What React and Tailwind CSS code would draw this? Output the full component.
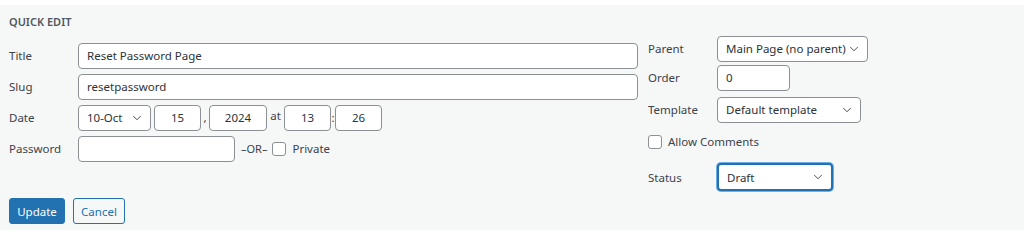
import { ChevronDown } from 'lucide-react'

const font = { fontFamily: '"Noto Sans", "Open Sans", sans-serif' }

function Label({ children }) {
  return <span className="w-[69px] shrink-0 text-[11.5px] text-[#3c434a]">{children}</span>
}

function TextBox({ value, className = '', center }) {
  return (
    <div
      className={`h-[26px] bg-white border border-[#8c8f94] rounded-[4px] flex items-center text-[11.5px] text-[#2c3338] ${
        center ? 'justify-center' : 'px-[8px]'
      } ${className}`}
    >
      {value}
    </div>
  )
}

function Select({ value, className = '', focused }) {
  return (
    <div
      className={`bg-white rounded-[4px] flex items-center justify-between pl-[8px] pr-[6px] text-[11.5px] text-[#2c3338] ${
        focused
          ? 'h-[28px] border-2 border-[#2271b1] shadow-[0_0_0_1px_#72aee6]'
          : 'h-[26px] border border-[#8c8f94]'
      } ${className}`}
    >
      <span className="whitespace-nowrap">{value}</span>
      <ChevronDown size={14} strokeWidth={1.6} color="#3c434a" />
    </div>
  )
}

function Checkbox() {
  return <span className="w-[14px] h-[14px] bg-white border border-[#8c8f94] rounded-[3px] shrink-0" />
}

export default function App() {
  return (
    <div className="w-[1024px] h-[230px] bg-white pt-[5px]" style={font}>
      <div className="h-full bg-[#f6f7f7] px-[9px]">
        <div className="pt-[9px] h-[31px] text-[11px] font-semibold uppercase text-[#50575e]">Quick Edit</div>

        <div className="flex gap-[10px] items-start">
          {/* left fieldset */}
          <div className="w-[629px] pt-[7px] flex flex-col gap-[5px]">
            <div className="flex items-center">
              <Label>Title</Label>
              <TextBox value="Reset Password Page" className="flex-1" />
            </div>
            <div className="flex items-center">
              <Label>Slug</Label>
              <TextBox value="resetpassword" className="flex-1" />
            </div>
            <div className="flex items-center text-[11.5px] text-[#3c434a]">
              <Label>Date</Label>
              <Select value="10-Oct" className="w-[73px]" />
              <TextBox value="15" center className="w-[47px] ml-[3px]" />
              <span className="w-[8px] text-center">,</span>
              <TextBox value="2024" center className="w-[58px]" />
              <span className="w-[17px] text-center -mt-[4px]">at</span>
              <TextBox value="13" center className="w-[47px]" />
              <span className="w-[4px] text-center">:</span>
              <TextBox value="26" center className="w-[47px]" />
            </div>
            <div className="flex items-center text-[11.5px] text-[#3c434a]">
              <Label>Password</Label>
              <TextBox value="" className="w-[157px]" />
              <span className="ml-[6px] text-[11px]">–OR–</span>
              <span className="ml-[5px] mr-[6px] flex"><Checkbox /></span>
              <span>Private</span>
            </div>
          </div>

          {/* right fieldset */}
          <div className="flex flex-col">
            <div className="flex items-center">
              <Label>Parent</Label>
              <Select value="Main Page (no parent)" className="w-[151px]" />
            </div>
            <div className="flex items-center mt-[3px]">
              <Label>Order</Label>
              <TextBox value="0" className="w-[73px]" />
            </div>
            <div className="flex items-center mt-[6px]">
              <Label>Template</Label>
              <Select value="Default template" className="w-[144px]" />
            </div>
            <div className="flex items-center gap-[6px] mt-[10px] text-[11.5px] text-[#3c434a]">
              <Checkbox />
              <span>Allow Comments</span>
            </div>
            <div className="flex items-center mt-[13px]">
              <Label>Status</Label>
              <Select value="Draft" focused className="w-[116px]" />
            </div>
          </div>
        </div>

        <div className="flex gap-[8px] mt-[7px]">
          <button className="h-[26px] w-[56px] bg-[#2271b1] text-white text-[11.5px] rounded-[3px] border border-[#2271b1]">
            Update
          </button>
          <button className="h-[26px] w-[52px] bg-[#f6f7f7] text-[#2271b1] text-[11.5px] rounded-[3px] border border-[#2271b1]">
            Cancel
          </button>
        </div>
      </div>
    </div>
  )
}
